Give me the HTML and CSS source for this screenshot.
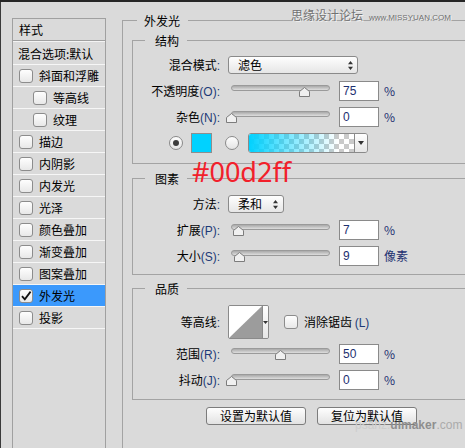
FILE: index.html
```html
<!DOCTYPE html>
<html lang="zh-CN">
<head>
<meta charset="utf-8">
<title>图层样式 - 外发光</title>
<link rel="stylesheet" href="styles.css">
</head>
<body>
<div class="topbar"></div>
<div class="frame">
  <aside class="styles">
    <div class="styles-head">样式</div>
    <div class="styles-blend">混合选项:默认</div>
    <ul class="fx-list">
      <li class="fx"><span class="cb"></span>斜面和浮雕</li>
      <li class="fx sub"><span class="cb"></span>等高线</li>
      <li class="fx sub"><span class="cb"></span>纹理</li>
      <li class="fx"><span class="cb"></span>描边</li>
      <li class="fx"><span class="cb"></span>内阴影</li>
      <li class="fx"><span class="cb"></span>内发光</li>
      <li class="fx"><span class="cb"></span>光泽</li>
      <li class="fx"><span class="cb"></span>颜色叠加</li>
      <li class="fx"><span class="cb"></span>渐变叠加</li>
      <li class="fx"><span class="cb"></span>图案叠加</li>
      <li class="fx selected"><span class="cb"><svg width="12" height="12" viewBox="0 0 12 12"><path d="M2 6.2 L4.8 9.4 L10.6 1.6" fill="none" stroke="#111" stroke-width="1.8"/></svg></span>外发光</li>
      <li class="fx"><span class="cb"></span>投影</li>
    </ul>
  </aside>

  <main class="main">
    <fieldset class="group outer">
      <legend>外发光</legend>

      <fieldset class="group inner s1">
        <legend>结构</legend>
        <div class="row">
          <span class="lbl">混合模式<span class="k">:</span></span>
          <div class="select wide"><span>滤色</span><svg width="5" height="9" viewBox="0 0 5 9"><path d="M2.5 0 L5 3.2 H0 Z M2.5 9 L5 5.8 H0 Z" fill="#333"/></svg></div>
        </div>
        <div class="row">
          <span class="lbl">不透明度<span class="k">(O):</span></span>
          <div class="slider"><div class="track"></div><svg class="thumb" style="left:71px" width="11" height="10" viewBox="0 0 11 10"><path d="M5.5 0.5 L10.5 4.5 V9.5 H0.5 V4.5 Z" fill="#f0f0f0" stroke="#7c7c7c"/></svg></div>
          <div class="num">75</div><span class="unit">%</span>
        </div>
        <div class="row">
          <span class="lbl">杂色<span class="k">(N):</span></span>
          <div class="slider"><div class="track"></div><svg class="thumb" style="left:-2px" width="11" height="10" viewBox="0 0 11 10"><path d="M5.5 0.5 L10.5 4.5 V9.5 H0.5 V4.5 Z" fill="#f0f0f0" stroke="#7c7c7c"/></svg></div>
          <div class="num">0</div><span class="unit">%</span>
        </div>
        <div class="row color-row">
          <span class="radio checked"></span>
          <span class="swatch"></span>
          <span class="radio second"></span>
          <div class="grad-picker">
            <span class="grad"></span>
            <span class="grad-btn"><svg width="6" height="4" viewBox="0 0 6 4"><path d="M0 0 H6 L3 4 Z" fill="#333"/></svg></span>
          </div>
        </div>
      </fieldset>

      <fieldset class="group inner s2">
        <legend>图素</legend>
        <div class="row">
          <span class="lbl">方法<span class="k">:</span></span>
          <div class="select narrow"><span>柔和</span><svg width="5" height="9" viewBox="0 0 5 9"><path d="M2.5 0 L5 3.2 H0 Z M2.5 9 L5 5.8 H0 Z" fill="#333"/></svg></div>
        </div>
        <div class="row">
          <span class="lbl">扩展<span class="k">(P):</span></span>
          <div class="slider"><div class="track"></div><svg class="thumb" style="left:5px" width="11" height="10" viewBox="0 0 11 10"><path d="M5.5 0.5 L10.5 4.5 V9.5 H0.5 V4.5 Z" fill="#f0f0f0" stroke="#7c7c7c"/></svg></div>
          <div class="num">7</div><span class="unit">%</span>
        </div>
        <div class="row">
          <span class="lbl">大小<span class="k">(S):</span></span>
          <div class="slider"><div class="track"></div><svg class="thumb" style="left:6px" width="11" height="10" viewBox="0 0 11 10"><path d="M5.5 0.5 L10.5 4.5 V9.5 H0.5 V4.5 Z" fill="#f0f0f0" stroke="#7c7c7c"/></svg></div>
          <div class="num">9</div><span class="unit">像素</span>
        </div>
      </fieldset>

      <fieldset class="group inner s3">
        <legend>品质</legend>
        <div class="row tall">
          <span class="lbl">等高线<span class="k">:</span></span>
          <div class="contour">
            <span class="contour-preview"><svg width="33" height="32" viewBox="0 0 33 32"><path d="M0 32 L33 0 V32 Z" fill="#9c9c9c"/></svg></span>
            <span class="contour-btn"><svg width="5" height="3" viewBox="0 0 5 3"><path d="M0 0 H5 L2.5 3 Z" fill="#333"/></svg></span>
          </div>
          <span class="cb aa"></span><span class="aa-text">消除锯齿 <span class="k">(L)</span></span>
        </div>
        <div class="row">
          <span class="lbl">范围<span class="k">(R):</span></span>
          <div class="slider"><div class="track"></div><svg class="thumb" style="left:47px" width="11" height="10" viewBox="0 0 11 10"><path d="M5.5 0.5 L10.5 4.5 V9.5 H0.5 V4.5 Z" fill="#f0f0f0" stroke="#7c7c7c"/></svg></div>
          <div class="num">50</div><span class="unit">%</span>
        </div>
        <div class="row">
          <span class="lbl">抖动<span class="k">(J):</span></span>
          <div class="slider"><div class="track"></div><svg class="thumb" style="left:-2px" width="11" height="10" viewBox="0 0 11 10"><path d="M5.5 0.5 L10.5 4.5 V9.5 H0.5 V4.5 Z" fill="#f0f0f0" stroke="#7c7c7c"/></svg></div>
          <div class="num">0</div><span class="unit">%</span>
        </div>
      </fieldset>

      <div class="buttons">
        <button class="btn" type="button">设置为默认值</button>
        <button class="btn" type="button">复位为默认值</button>
      </div>
    </fieldset>
  </main>
</div>

<div class="annot">#00d2ff</div>
<div class="wm-top"><span class="wm-cn">思缘设计论坛</span><span class="wm-en">www.MISSYUAN.COM</span></div>
<div class="wm-bottom"><span class="wm-a">psahz.</span><span class="wm-b">uimaker</span><span class="wm-c">.com</span></div>
</body>
</html>
```

FILE: styles.css
```css
* { box-sizing: border-box; }
html, body { margin: 0; padding: 0; }
body {
  position: relative;
  width: 465px;
  height: 448px;
  overflow: hidden;
  background: #dadada;
  color: #000;
  font-family: "Noto Sans CJK SC", "Noto Sans", sans-serif;
  font-size: 12px;
  line-height: 16px;
}

.topbar { height: 2px; background: #262626; }

.frame {
  display: flex;
  align-items: flex-start;
  height: 446px;
  border-left: 1px solid #3a3a3a;
}

/* left style list */
.styles {
  flex: none;
  width: 94px;
  height: 440px;
  margin: 16px 0 0 11px;
  border: 1px solid #a0a0a0;
}
.styles-head {
  height: 22px;
  padding: 3px 0 0 6px;
  border-bottom: 1px solid #a0a0a0;
}
.styles-blend {
  height: 24px;
  padding: 4px 0 0 5px;
  border-top: 1px solid #f4f4f4;
  border-bottom: 1px solid #f6f6f6;
  white-space: nowrap;
}
.fx-list { margin: 0; padding: 0; list-style: none; }
.fx {
  display: flex;
  align-items: center;
  height: 22px;
  padding-left: 6px;
  border-bottom: 1px solid #f6f6f6;
  white-space: nowrap;
}
.fx.sub { padding-left: 20px; }
.fx.selected { background: #3b99fc; }

.cb {
  flex: none;
  display: flex;
  align-items: center;
  justify-content: center;
  width: 14px;
  height: 14px;
  margin-right: 6px;
  border: 1px solid #8c8c8c;
  border-radius: 3px;
  background: linear-gradient(#fefefe, #e8e8e8);
}

/* main panel */
.main { flex: none; margin: 10px 0 0 16px; }

fieldset.group {
  margin: 0;
  min-width: 0;
  border: 1px solid #a3a3a3;
}
fieldset.outer { width: 360px; padding: 3px 0 40px 0; }
fieldset.outer > legend {
  margin-left: 14px;
  padding: 0 8px 0 7px;
  line-height: 17px;
}
fieldset.inner { margin-left: 9px; }
fieldset.inner > legend {
  margin-left: 12px;
  padding: 0 8px 0 10px;
  line-height: 17px;
}
fieldset.s1 { padding: 3px 0 7px 0; }
fieldset.s2 { margin-top: 6px; padding: 4px 0 5px 0; }
fieldset.s3 { margin-top: 5px; padding: 6px 0 6px 0; }

.row {
  display: flex;
  align-items: center;
  height: 26px;
  white-space: nowrap;
}
.row.tall { height: 38px; }

.lbl {
  flex: none;
  width: 95px;
  padding-right: 8px;
  text-align: right;
}
.k {
  color: #1d3a78;
  font-family: "Liberation Sans", sans-serif;
}

.select {
  flex: none;
  display: flex;
  align-items: center;
  justify-content: space-between;
  height: 18px;
  padding: 0 4px 0 9px;
  border: 1px solid #8a8a8a;
  border-radius: 3px;
  background: linear-gradient(#fefefe, #e6e6e6);
}
.select.wide { width: 130px; }
.select.narrow { width: 56px; padding-right: 5px; }

.slider {
  position: relative;
  flex: none;
  width: 104px;
  height: 12px;
}
.track {
  position: absolute;
  left: 3px;
  top: 0;
  width: 99px;
  height: 6px;
  border: 1px solid #9a9a9a;
  border-radius: 3px;
  background: linear-gradient(#a9a9a9, #dedede);
}
.thumb { position: absolute; top: 2px; }

.num {
  flex: none;
  width: 40px;
  height: 20px;
  margin-left: 7px;
  padding: 1px 0 0 3px;
  border: 1px solid #8a8a8a;
  background: #fff;
  color: #1d3070;
  font-family: "Liberation Sans", sans-serif;
  font-size: 12px;
}
.unit { margin-left: 5px; color: #1d3070; }

/* color row */
.radio {
  flex: none;
  position: relative;
  width: 14px;
  height: 14px;
  border: 1px solid #8a8a8a;
  border-radius: 50%;
  background: linear-gradient(#fefefe, #e4e4e4);
}
.color-row .radio.checked { margin-left: 36px; }
.radio.checked::after {
  content: "";
  position: absolute;
  left: 3px;
  top: 3px;
  width: 6px;
  height: 6px;
  border-radius: 50%;
  background: #3c3c3c;
}
.swatch {
  flex: none;
  width: 21px;
  height: 20px;
  margin-left: 8px;
  border: 1px solid #8e8e8e;
  background: #00d2ff;
}
.radio.second { margin-left: 13px; }
.grad-picker {
  flex: none;
  display: flex;
  height: 20px;
  margin-left: 9px;
  border: 1px solid #8a8a8a;
  border-radius: 3px;
  overflow: hidden;
}
.grad {
  width: 105px;
  background:
    linear-gradient(to right, #00d2ff 0%, rgba(0, 210, 255, 0.55) 35%, rgba(0, 210, 255, 0) 85%),
    repeating-conic-gradient(#cacaca 0 25%, #ffffff 0 50%) 0 0 / 10px 10px;
}
.grad-btn {
  display: flex;
  align-items: center;
  justify-content: center;
  width: 13px;
  border-left: 1px solid #8a8a8a;
  background: linear-gradient(#fefefe, #e6e6e6);
}

/* contour */
.contour {
  flex: none;
  display: flex;
  width: 41px;
  height: 34px;
  border: 1px solid #8a8a8a;
  border-radius: 2px;
  overflow: hidden;
}
.contour-preview {
  display: flex;
  align-items: flex-end;
  width: 33px;
  background: #fff;
}
.contour-btn {
  display: flex;
  align-items: center;
  justify-content: center;
  width: 7px;
  border-left: 1px solid #8a8a8a;
  background: linear-gradient(#fefefe, #e6e6e6);
}
.cb.aa { margin-left: 15px; }

/* buttons */
.buttons {
  display: flex;
  gap: 11px;
  margin-top: 7px;
  padding-left: 83px;
}
.btn {
  width: 100px;
  height: 18px;
  padding: 0;
  border: 1px solid #7c7c7c;
  border-radius: 3px;
  background: linear-gradient(#fefefe, #e2e2e2);
  color: #000;
  font-family: "Noto Sans CJK SC", sans-serif;
  font-size: 12px;
  line-height: 16px;
}

/* overlays */
.annot {
  position: absolute;
  left: 192px;
  top: 158px;
  color: #f2202b;
  font-family: "Noto Sans", sans-serif;
  font-size: 27px;
  line-height: 27px;
}
.wm-top {
  position: absolute;
  left: 291px;
  top: 7px;
  display: flex;
  align-items: baseline;
  white-space: nowrap;
}
.wm-cn {
  color: #727272;
  font-size: 12px;
  line-height: 16px;
  text-shadow: 1px 1px 0 #f2f2f2;
}
.wm-en {
  margin-left: 6px;
  color: #6e6e6e;
  font-family: "Liberation Sans", sans-serif;
  font-size: 8px;
  text-shadow: 1px 1px 0 #f2f2f2;
}
.wm-bottom {
  position: absolute;
  left: 355px;
  top: 417px;
  font-family: "Liberation Sans", sans-serif;
  font-size: 12px;
  line-height: 16px;
  white-space: nowrap;
}
.wm-a { color: #cdcdcd; }
.wm-b { color: #8e8e8e; font-weight: bold; }
.wm-c { color: #ababab; }
```
